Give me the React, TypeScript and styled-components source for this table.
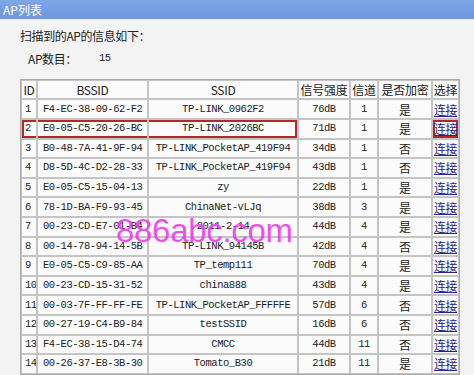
import React from "react";
import styled, { createGlobalStyle, css } from "styled-components";

const GlobalStyle = createGlobalStyle`
  html, body {
    margin: 0;
    padding: 0;
    background: #f3f3f4;
  }
  body {
    font-family: "Noto Sans CJK SC", "Liberation Sans", sans-serif;
    font-size: 12px;
    color: #222;
  }
`;

const Page = styled.div`
  width: 474px;
  height: 375px;
  overflow: hidden;
  display: flex;
  flex-direction: column;
  position: relative;
`;

const TitleBar = styled.div`
  height: 19px;
  background: linear-gradient(#7fa6e6, #6c97df);
  color: #fff;
  font-size: 12px;
  line-height: 19px;
  padding-left: 3px;
  border-bottom: 1px solid #e8edf6;
`;

const Body = styled.div`
  display: flex;
  flex-direction: column;
  padding: 7px 0 0 20px;
`;

const Heading = styled.div`
  height: 17px;
  line-height: 17px;
  letter-spacing: -0.4px;
`;

const CountLine = styled.div`
  display: flex;
  height: 17px;
  line-height: 17px;
  margin-top: 6px;
  padding-left: 8px;
  letter-spacing: -0.4px;
`;

const CountValue = styled.span`
  margin-left: 22px;
  font-family: "Liberation Mono", monospace;
  font-size: 10.5px;
  letter-spacing: -0.45px;
`;

const Mono = styled.span`
  display: inline-block;
  vertical-align: top;
  line-height: 15px;
  font-family: "Liberation Mono", monospace;
  font-size: 10.5px;
  letter-spacing: -0.45px;
`;

const Table = styled.table`
  margin-top: 12px;
  width: 438px;
  table-layout: fixed;
  border-collapse: separate;
  border-spacing: 0;
  border: 1px solid #a9a9a9;
  background: #fbfbfb;
`;

type Mark = "l" | "m" | "r" | "all";

const red = "#b3262a";

const markStyle = (m?: Mark) => {
  if (!m) return "";
  const top = `inset 0 2px ${red}, inset 0 -2px ${red}`;
  if (m === "l") return css`box-shadow: inset 2px 0 ${red}, ${top};`;
  if (m === "r") return css`box-shadow: inset -2px 0 ${red}, ${top};`;
  if (m === "all") return css`box-shadow: inset 2px 0 ${red}, inset -2px 0 ${red}, ${top};`;
  return css`box-shadow: ${top};`;
};

const Cell = styled.td<{ $align?: "left" | "center"; $pad?: number; $mark?: Mark }>`
  height: 17.6px;
  padding: 0 0 0 ${(p) => p.$pad ?? 0}px;
  border: 1px solid #c4c4c4;
  text-align: ${(p) => p.$align ?? "center"};
  white-space: nowrap;
  overflow: hidden;
  line-height: 15px;
  ${(p) => markStyle(p.$mark)}
`;

const Head = styled.th<{ $w: number }>`
  width: ${(p) => p.$w}px;
  height: 17.4px;
  padding: 0;
  border: 1px solid #c4c4c4;
  font-weight: normal;
  text-align: center;
  white-space: nowrap;
  overflow: hidden;
  line-height: 15px;
  letter-spacing: -0.3px;
`;

const Link = styled.a`
  display: inline-block;
  vertical-align: top;
  line-height: 15px;
  color: #25238c;
  text-decoration: underline;
  cursor: pointer;
  letter-spacing: -0.5px;
`;

const Watermark = styled.div`
  position: absolute;
  left: 116px;
  top: 212px;
  font-family: "Liberation Sans", sans-serif;
  font-size: 33px;
  color: rgba(236, 56, 230, 0.88);
  letter-spacing: -0.3px;
  pointer-events: none;
`;

type Ap = [string, string, string, number, boolean];

const aps: Ap[] = [
  ["F4-EC-38-09-62-F2", "TP-LINK_0962F2", "76dB", 1, true],
  ["E0-05-C5-20-26-BC", "TP-LINK_2026BC", "71dB", 1, true],
  ["B0-48-7A-41-9F-94", "TP-LINK_PocketAP_419F94", "34dB", 1, false],
  ["D8-5D-4C-D2-28-33", "TP-LINK_PocketAP_419F94", "43dB", 1, false],
  ["E0-05-C5-15-04-13", "zy", "22dB", 1, true],
  ["78-1D-BA-F9-93-45", "ChinaNet-vLJq", "38dB", 3, true],
  ["00-23-CD-E7-01-B4", "2011-2-14", "44dB", 4, true],
  ["00-14-78-94-14-5B", "TP-LINK_94145B", "42dB", 4, false],
  ["E0-05-C5-C9-85-AA", "TP_temp111", "70dB", 4, true],
  ["00-23-CD-15-31-52", "china888", "43dB", 4, true],
  ["00-03-7F-FF-FF-FE", "TP-LINK_PocketAP_FFFFFE", "57dB", 6, false],
  ["00-27-19-C4-B9-84", "testSSID", "16dB", 6, false],
  ["F4-EC-38-15-D4-74", "CMCC", "44dB", 11, false],
  ["00-26-37-E8-3B-30", "Tomato_B30", "21dB", 11, true],
];

export default function App() {
  return (
    <Page>
      <GlobalStyle />
      <TitleBar>AP列表</TitleBar>
      <Body>
        <Heading>扫描到的AP的信息如下：</Heading>
        <CountLine>
          AP数目：<CountValue>15</CountValue>
        </CountLine>
        <Table>
          <thead>
            <tr>
              <Head $w={14}>ID</Head>
              <Head $w={109}>BSSID</Head>
              <Head $w={148}>SSID</Head>
              <Head $w={50}>信号强度</Head>
              <Head $w={26}>信道</Head>
              <Head $w={52}>是否加密</Head>
              <Head $w={25}>选择</Head>
            </tr>
          </thead>
          <tbody>
            {aps.map(([bssid, ssid, signal, channel, enc], i) => {
              const hi = i === 1;
              return (
                <tr key={bssid}>
                  <Cell $align="left" $pad={3} $mark={hi ? "l" : undefined}>
                    <Mono>{i + 1}</Mono>
                  </Cell>
                  <Cell $align="left" $pad={5} $mark={hi ? "m" : undefined}>
                    <Mono>{bssid}</Mono>
                  </Cell>
                  <Cell $mark={hi ? "r" : undefined}>
                    <Mono>{ssid}</Mono>
                  </Cell>
                  <Cell>
                    <Mono>{signal}</Mono>
                  </Cell>
                  <Cell>
                    <Mono>{channel}</Mono>
                  </Cell>
                  <Cell>{enc ? "是" : "否"}</Cell>
                  <Cell $mark={hi ? "all" : undefined}>
                    <Link>连接</Link>
                  </Cell>
                </tr>
              );
            })}
          </tbody>
        </Table>
      </Body>
      <Watermark>886abc.com</Watermark>
    </Page>
  );
}
